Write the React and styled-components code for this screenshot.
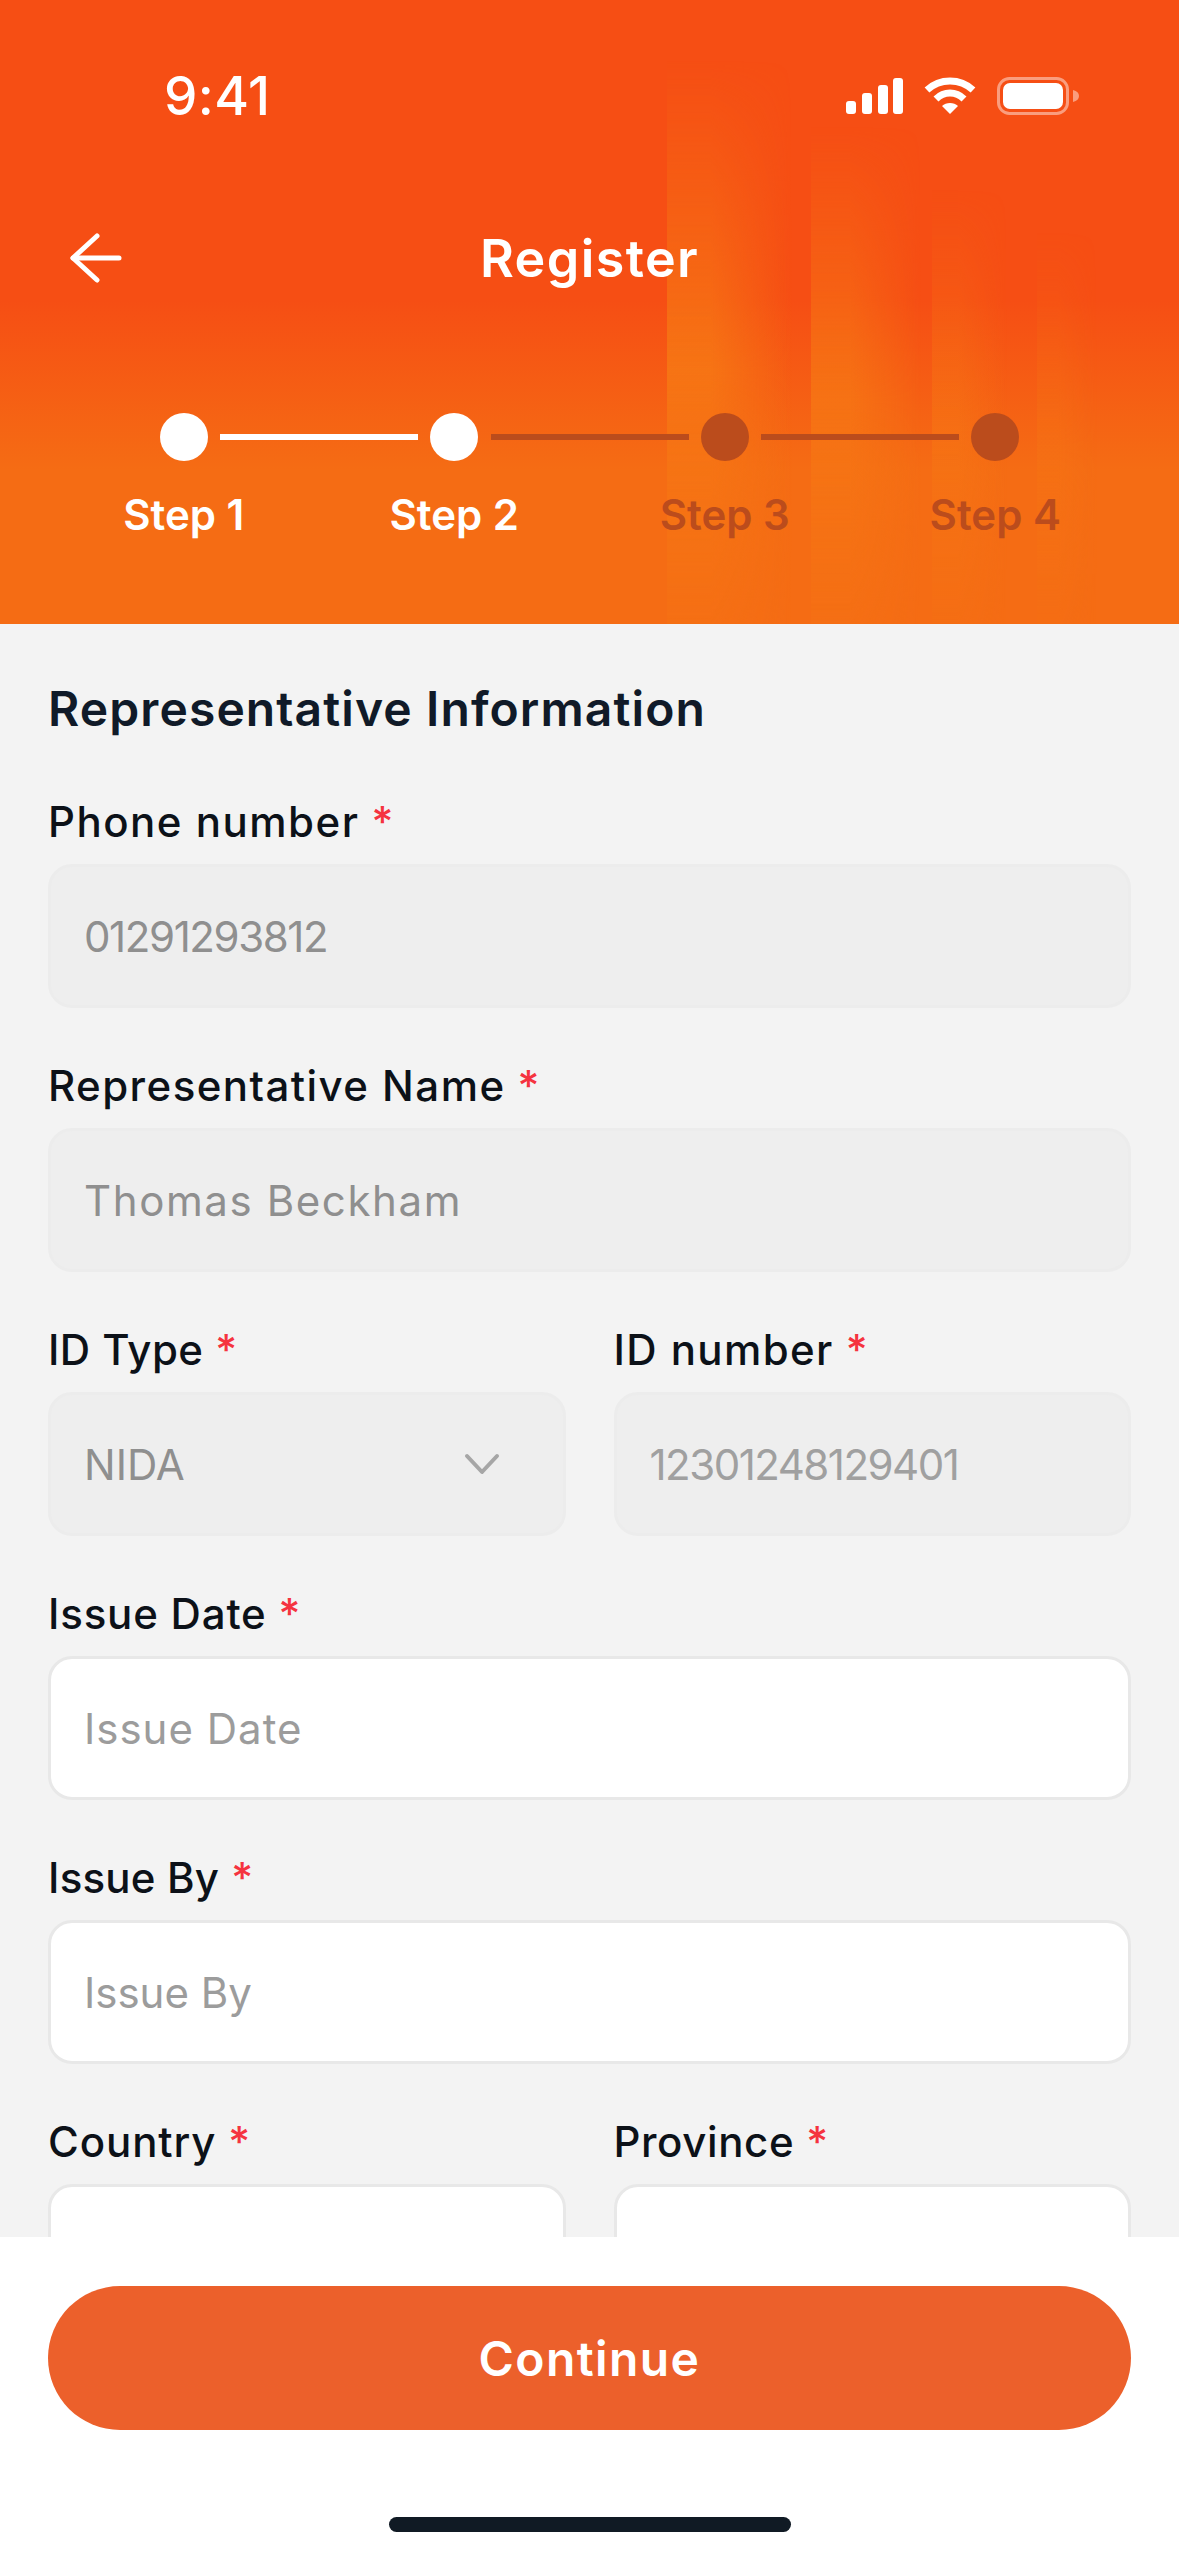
import React from 'react';
import styled, { createGlobalStyle } from 'styled-components';

const GlobalStyle = createGlobalStyle`
  html, body {
    margin: 0;
    padding: 0;
    background: #fff;
  }
  * {
    box-sizing: border-box;
  }
`;

const Page = styled.div`
  width: 1179px;
  height: 2556px;
  display: flex;
  flex-direction: column;
  overflow: hidden;
  font-family: Inter, "Noto Sans", sans-serif;
  background: #f3f3f3;
`;

const Header = styled.header`
  position: relative;
  height: 624px;
  flex-shrink: 0;
  color: #fff;
  background: linear-gradient(180deg, #f64e14 0, #f64e14 300px, #f56c14 470px, #f56c14 100%);
`;

// soft vertical light streaks behind the header content
const Streak = styled.span`
  position: absolute;
  left: ${p => p.$left}px;
  top: ${p => p.$top}px;
  bottom: 0;
  width: ${p => p.$width}px;
  background: linear-gradient(90deg, rgba(246, 120, 20, ${p => p.$alpha}) 0, rgba(246, 120, 20, ${p => p.$alpha}) 35%, rgba(246, 120, 20, 0) 100%);
  mask-image: linear-gradient(180deg, transparent 0, #000 55%, rgba(0, 0, 0, 0.3) 100%);
`;

const HeaderContent = styled.div`
  position: relative;
`;

const StatusBar = styled.div`
  height: 120px;
  padding: 72px 100px 0 164px;
  display: flex;
  justify-content: space-between;
  align-items: center;
`;

const Time = styled.span`
  font-size: 53px;
  font-weight: 500;
  letter-spacing: 0.4px;
`;

const StatusIcons = styled.div`
  display: flex;
  align-items: center;
  gap: 21px;
`;

const TitleRow = styled.div`
  height: 76px;
  margin-top: 100px;
  position: relative;
  display: flex;
  align-items: center;
  justify-content: center;
`;

const BackButton = styled.button`
  position: absolute;
  left: 70px;
  top: 12px;
  width: 52px;
  height: 52px;
  padding: 0;
  border: none;
  background: none;
  color: #fff;
`;

const Title = styled.h1`
  margin: 0;
  font-size: 52px;
  font-weight: 600;
  letter-spacing: 1.4px;
`;

const Stepper = styled.ol`
  list-style: none;
  margin: 117px 0 0;
  padding: 0 48px;
  display: grid;
  grid-template-columns: repeat(4, 270.5px);
  justify-content: center;
`;

const Step = styled.li`
  position: relative;
  display: flex;
  flex-direction: column;
  align-items: center;
  color: ${p => (p.$done ? '#fff' : '#bb4c1c')};

  &:not(:first-child)::before {
    content: '';
    position: absolute;
    top: 21px;
    right: calc(50% + 36px);
    width: 198px;
    height: 6px;
    background: currentColor;
  }
`;

const Dot = styled.span`
  width: 48px;
  height: 48px;
  border-radius: 50%;
  background: currentColor;
`;

const StepLabel = styled.span`
  margin-top: 28px;
  font-size: 42px;
  line-height: 52px;
  font-weight: 600;
`;

const Form = styled.main`
  flex: 1;
  min-height: 0;
  overflow: hidden;
  padding: 58px 48px 0;
  display: flex;
  flex-direction: column;
  gap: 51px;
`;

const Heading = styled.h2`
  margin: 0 0 8px;
  height: 54px;
  line-height: 54px;
  font-size: 48px;
  font-weight: 600;
  letter-spacing: 1.1px;
  color: #101a28;
`;

const FieldRow = styled.div`
  display: grid;
  grid-template-columns: 1fr 1fr;
  gap: 48px;
  flex-shrink: 0;
`;

const Field = styled.div`
  display: flex;
  flex-direction: column;
  gap: 15px;
  flex-shrink: 0;
`;

const Label = styled.label`
  height: 54px;
  line-height: 54px;
  font-size: 42px;
  font-weight: 500;
  letter-spacing: ${p => p.$tracking}px;
  color: #0c1118;
`;

const Required = styled.span`
  color: #f5333f;
  margin-left: 12px;
`;

const InputBox = styled.div`
  height: 144px;
  padding: 0 33px;
  border-radius: 24px;
  border: 3px solid ${p => (p.$disabled ? '#ececec' : '#e8e8e8')};
  background: ${p => (p.$disabled ? '#eeeeee' : '#ffffff')};
  display: flex;
  align-items: center;
  justify-content: space-between;
  font-size: 42px;
  color: ${p => (p.$disabled ? '#8f8f8f' : '#9c9c9c')};
`;

const InputValue = styled.span`
  letter-spacing: ${p => p.$tracking}px;
  ${p => p.$faded && 'color: #a0a0a0;'}
`;

const Chevron = styled.svg`
  margin-right: 30px;
`;

const Footer = styled.footer`
  height: 319px;
  flex-shrink: 0;
  padding: 49px 48px 0;
  background: #fff;
  display: flex;
  flex-direction: column;
  align-items: center;
`;

const ContinueButton = styled.button`
  width: 100%;
  height: 144px;
  border: none;
  border-radius: 72px;
  background: #ec602b;
  color: #fff;
  font-family: inherit;
  font-size: 48px;
  font-weight: 600;
  letter-spacing: 1.4px;
`;

const HomeBar = styled.div`
  width: 402px;
  height: 15px;
  margin-top: 87px;
  border-radius: 8px;
  background: #101a24;
`;

const SignalIcon = () => (
  <svg width="57" height="36" viewBox="0 0 57 36" fill="#fff">
    <rect x="0" y="23" width="10" height="13" rx="3" />
    <rect x="16" y="15" width="10" height="21" rx="3" />
    <rect x="32" y="7" width="10" height="29" rx="3" />
    <rect x="47" y="0" width="10" height="36" rx="3" />
  </svg>
);

const WifiIcon = () => (
  <svg width="52" height="38" viewBox="0 0 52 38" fill="none" stroke="#fff" strokeWidth="7">
    <path d="M3 13 C16 1 36 1 49 13" />
    <path d="M12 22 C20 14 32 14 40 22" />
    <path d="M26 37 L18 29 C22 25 30 25 34 29 Z" fill="#fff" stroke="none" />
  </svg>
);

const BatteryIcon = () => (
  <svg width="82" height="38" viewBox="0 0 82 38" fill="none">
    <rect x="1.5" y="1.5" width="69" height="35" rx="11" stroke="#fff" strokeOpacity="0.45" strokeWidth="3" />
    <rect x="6" y="6" width="60" height="26" rx="7" fill="#fff" />
    <path d="M76 13 C80 14 82 16 82 19 C82 22 80 24 76 25 Z" fill="#fff" fillOpacity="0.45" />
  </svg>
);

const BackIcon = () => (
  <svg width="52" height="52" viewBox="0 0 52 52" fill="none" stroke="currentColor" strokeWidth="5" strokeLinecap="round" strokeLinejoin="round">
    <path d="M49 26 H3" />
    <path d="M27 4 L3 26 L27 48" />
  </svg>
);

const ChevronIcon = () => (
  <Chevron width="36" height="22" viewBox="0 0 36 22" fill="none" stroke="#a6a6a6" strokeWidth="4" strokeLinecap="round" strokeLinejoin="round">
    <path d="M3 3 L18 19 L33 3" />
  </Chevron>
);

const streaks = [
  { left: 667, top: 60, width: 125, alpha: 0.85 },
  { left: 811, top: 126, width: 110, alpha: 0.75 },
  { left: 932, top: 190, width: 75, alpha: 0.5 },
  { left: 1037, top: 232, width: 60, alpha: 0.35 },
];

const steps = [
  { label: 'Step 1', done: true },
  { label: 'Step 2', done: true },
  { label: 'Step 3', done: false },
  { label: 'Step 4', done: false },
];

const TextField = ({ label, labelTracking = 0, value, tracking = 0, disabled, faded, chevron }) => (
  <Field>
    <Label $tracking={labelTracking}>
      {label}
      <Required>*</Required>
    </Label>
    <InputBox $disabled={disabled}>
      <InputValue $tracking={tracking} $faded={faded}>{value}</InputValue>
      {chevron && <ChevronIcon />}
    </InputBox>
  </Field>
);

export default function App() {
  return (
    <Page>
      <GlobalStyle />
      <Header>
        {streaks.map(s => (
          <Streak key={s.left} $left={s.left} $top={s.top} $width={s.width} $alpha={s.alpha} />
        ))}
        <HeaderContent>
          <StatusBar>
            <Time>9:41</Time>
            <StatusIcons>
              <SignalIcon />
              <WifiIcon />
              <BatteryIcon />
            </StatusIcons>
          </StatusBar>
          <TitleRow>
            <BackButton aria-label="Back">
              <BackIcon />
            </BackButton>
            <Title>Register</Title>
          </TitleRow>
          <Stepper>
            {steps.map(step => (
              <Step key={step.label} $done={step.done}>
                <Dot />
                <StepLabel>{step.label}</StepLabel>
              </Step>
            ))}
          </Stepper>
        </HeaderContent>
      </Header>

      <Form>
        <Heading>Representative Information</Heading>
        <TextField label="Phone number" labelTracking={1.5} value="01291293812" tracking={-1.4} disabled />
        <TextField label="Representative Name" labelTracking={1.45} value="Thomas Beckham" tracking={1.6} disabled />
        <FieldRow>
          <TextField label="ID Type" labelTracking={0.4} value="NIDA" disabled chevron />
          <TextField label="ID number" labelTracking={1.4} value="12301248129401" tracking={-1.5} disabled faded />
        </FieldRow>
        <TextField label="Issue Date" labelTracking={0.8} value="Issue Date" tracking={1} />
        <TextField label="Issue By" labelTracking={0.2} value="Issue By" />
        <FieldRow>
          <TextField label="Country" labelTracking={0.9} />
          <TextField label="Province" labelTracking={0.6} />
        </FieldRow>
      </Form>

      <Footer>
        <ContinueButton>Continue</ContinueButton>
        <HomeBar />
      </Footer>
    </Page>
  );
}
